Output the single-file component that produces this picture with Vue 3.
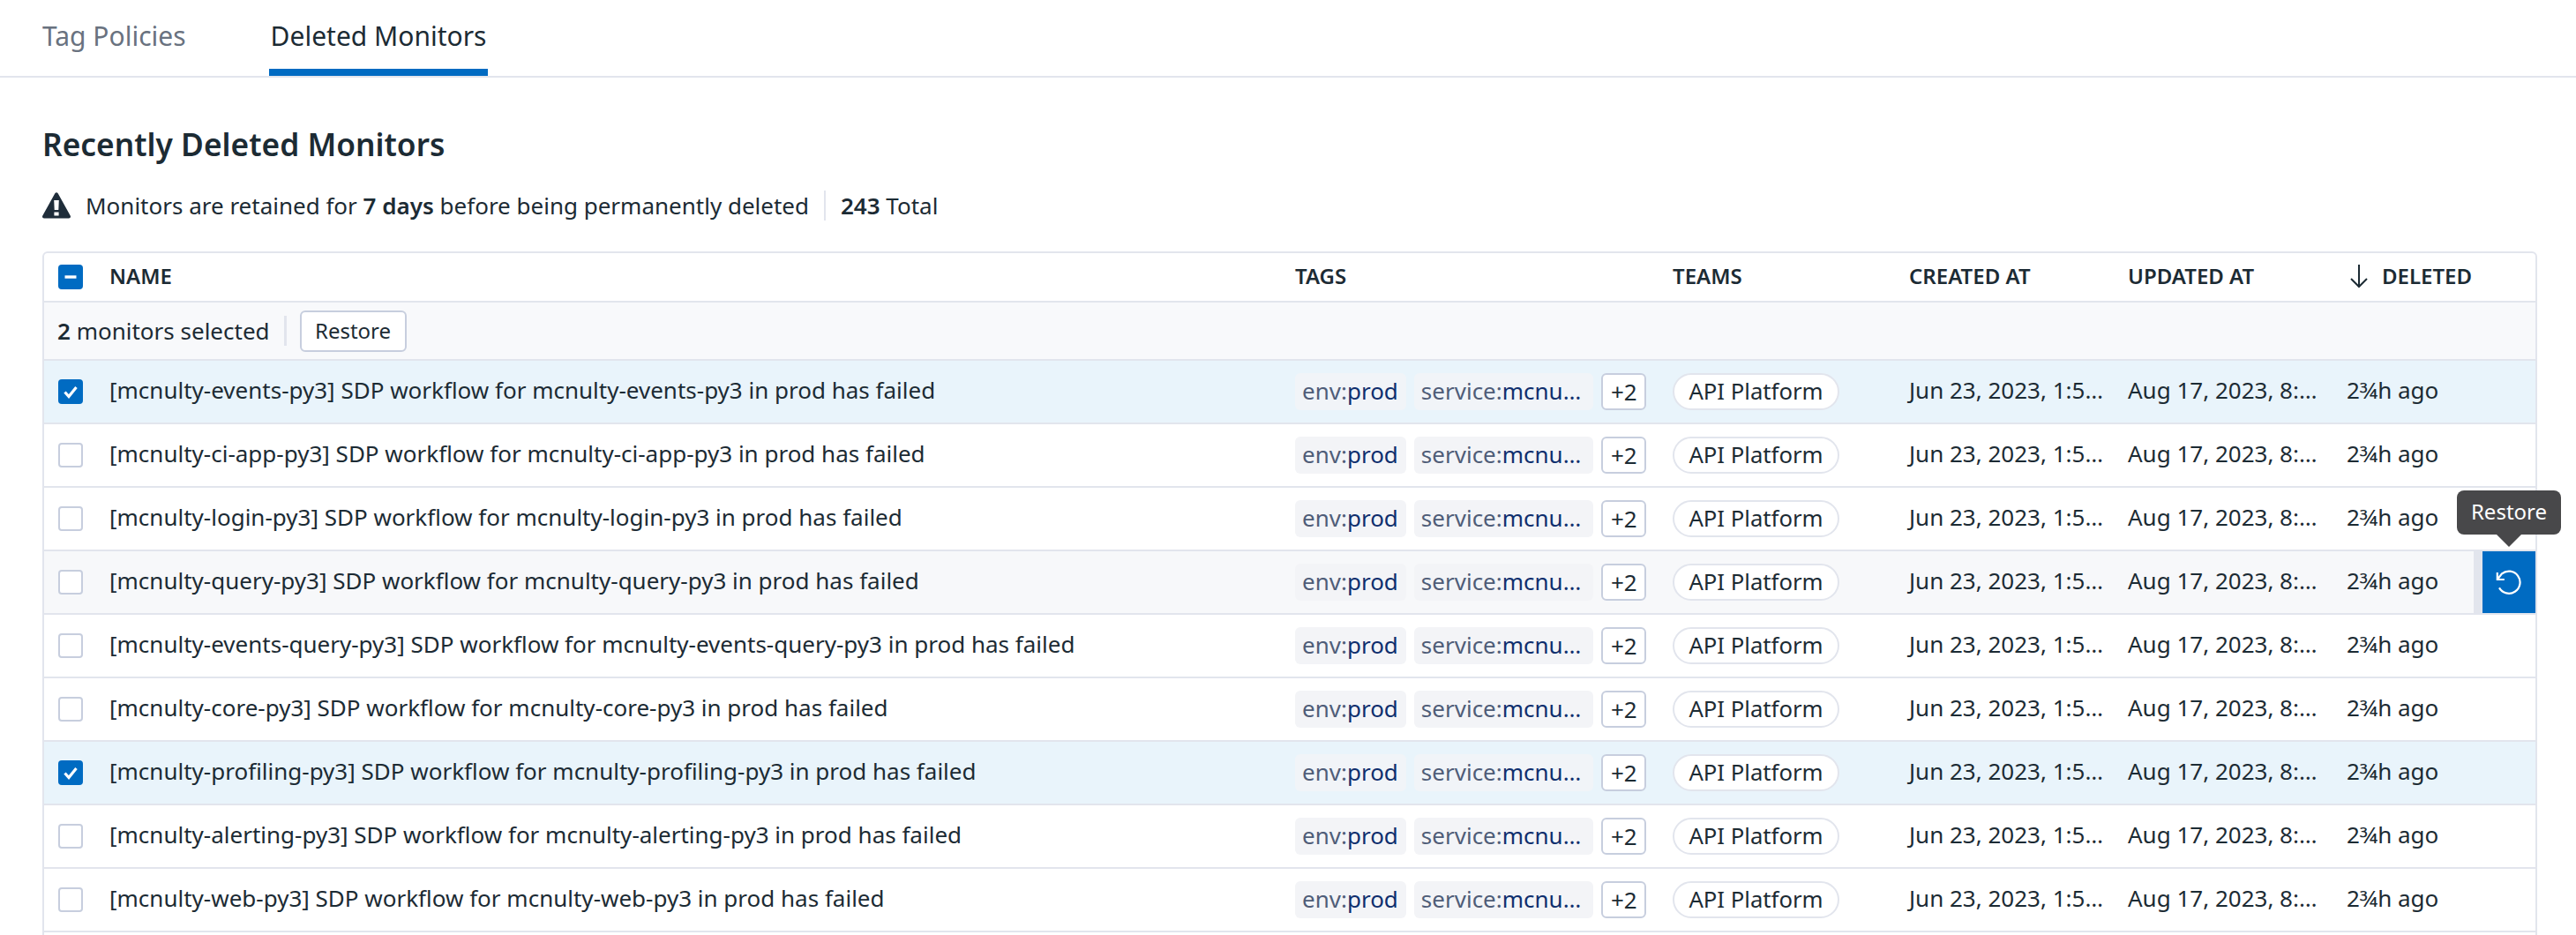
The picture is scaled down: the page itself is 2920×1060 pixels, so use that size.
<template>
  <div class="page">
    <nav class="tabs">
      <a class="tab">Tag Policies</a>
      <a class="tab active">Deleted Monitors</a>
    </nav>
    <main class="content">
      <h1 class="title">Recently Deleted Monitors</h1>
      <div class="notice">
        <svg class="warn" viewBox="0 0 32 30">
          <path fill="#1f2d3a" d="M14.3 1.2c.8-1.4 2.6-1.4 3.4 0l14 25.2c.8 1.4-.1 3.1-1.7 3.1H2c-1.6 0-2.5-1.7-1.7-3.1z" />
          <path fill="#fff" d="M13.2 9h5.6l-.5 11h-4.6zM13.4 22.6h5.2v3.8h-5.2z" />
        </svg>
        <span class="notice-text">Monitors are retained for <b>7 days</b> before being permanently deleted</span>
        <span class="notice-sep"></span>
        <span><b>243</b> Total</span>
      </div>

      <div class="table">
        <div class="row head">
          <span class="cell-check">
            <span class="check on">
              <svg viewBox="0 0 28 28"><path d="M7.5 14h13" stroke="#fff" stroke-width="3.4" fill="none" /></svg>
            </span>
          </span>
          <span>NAME</span>
          <span>TAGS</span>
          <span>TEAMS</span>
          <span>CREATED AT</span>
          <span>UPDATED AT</span>
          <span class="sorted">
            <svg class="arrow" viewBox="0 0 24 28">
              <path d="M12 1v25M3 17l9 9 9-9" stroke="#1c2b34" stroke-width="2" fill="none" />
            </svg>
            DELETED
          </span>
        </div>

        <div class="selection">
          <span><b>2</b> monitors selected</span>
          <span class="selection-sep"></span>
          <button class="btn">Restore</button>
        </div>

        <div
          v-for="m in monitors"
          :key="m.name"
          class="row item"
          :class="{ selected: m.selected, hovered: m.hovered }"
        >
          <span class="cell-check">
            <span class="check" :class="{ on: m.selected }">
              <svg v-if="m.selected" viewBox="0 0 28 28">
                <path d="M7.5 14.5l4.5 5 8.5-10.5" stroke="#fff" stroke-width="3.2" fill="none" />
              </svg>
            </span>
          </span>
          <span class="name">[{{ m.name }}] SDP workflow for {{ m.name }} in prod has failed</span>
          <span class="tags">
            <span class="tag">env:<em>prod</em></span>
            <span class="tag cut">service:<em>mcnu…</em></span>
            <span class="more">+2</span>
          </span>
          <span class="teams"><span class="team">API Platform</span></span>
          <span class="txt">Jun 23, 2023, 1:5…</span>
          <span class="txt">Aug 17, 2023, 8:…</span>
          <span class="txt">2¾h ago</span>

          <template v-if="m.hovered">
            <span class="restore-action">
              <svg viewBox="0 0 30 28">
                <path d="M4 20.4A12.6 12.6 0 1 0 7 4.4L1.8 11" stroke="#fff" stroke-width="2.2" fill="none" />
                <path d="M1.8 3v8h8" stroke="#fff" stroke-width="2.2" fill="none" />
              </svg>
            </span>
            <span class="tooltip">Restore</span>
          </template>
        </div>
      </div>
    </main>
  </div>
</template>

<script setup>
const names = [
  'mcnulty-events-py3',
  'mcnulty-ci-app-py3',
  'mcnulty-login-py3',
  'mcnulty-query-py3',
  'mcnulty-events-query-py3',
  'mcnulty-core-py3',
  'mcnulty-profiling-py3',
  'mcnulty-alerting-py3',
  'mcnulty-web-py3'
]

const monitors = names.map((name, i) => ({
  name,
  selected: i === 0 || i === 6,
  hovered: i === 3
}))
</script>

<style>
html,
body {
  margin: 0;
  overflow: hidden;
  background: #fff;
}
</style>

<style scoped>
.page {
  height: 1060px;
  overflow: hidden;
  font-family: "Noto Sans", sans-serif;
  font-size: 26px;
  line-height: 36px;
  color: #1c2b34;
}

.tabs {
  display: flex;
  gap: 94px;
  height: 86px;
  padding-left: 48px;
  border-bottom: 2px solid #e2e5ed;
}

.tab {
  height: 78px;
  padding-top: 18px;
  box-sizing: border-box;
  font-size: 30px;
  line-height: 46px;
  color: #69727f;
}

.tab.active {
  height: 86px;
  padding: 18px 2px 0;
  color: #1c2b34;
  border-bottom: 8px solid #006bc2;
}

.content {
  padding: 0 44px 0 48px;
}

.title {
  margin: 51px 0 0;
  font-size: 35.3px;
  line-height: 48px;
  font-weight: 600;
  color: #1c2b34;
}

.notice {
  display: flex;
  align-items: center;
  height: 40px;
  margin-top: 26px;
  font-size: 26px;
}

.warn {
  width: 32px;
  height: 30px;
  margin-right: 17px;
}

.notice b,
.selection b {
  font-weight: 600;
}

.notice-sep {
  width: 2px;
  height: 34px;
  margin: 0 17px;
  background: #e2e5ed;
}

.table {
  height: 800px;
  margin-top: 32px;
  border: 2px solid #e2e5ed;
  border-radius: 6px 6px 0 0;
}

.row {
  display: grid;
  grid-template-columns: 74px 1344px 428px 268px 248px 248px 1fr;
  align-items: center;
  position: relative;
  box-sizing: border-box;
  height: 72px;
  border-bottom: 2px solid #e2e5ed;
}

.head {
  height: 56px;
  font-size: 24px;
  font-weight: 600;
}

.head > span:not(.cell-check) {
  margin-bottom: 3px;
}

.name,
.txt {
  margin-bottom: 4px;
}

.cell-check {
  display: flex;
  padding-left: 16px;
}

.check {
  display: block;
  box-sizing: border-box;
  width: 28px;
  height: 28px;
  border: 2px solid #c7cede;
  border-radius: 4px;
  background: #fff;
}

.check.on {
  border: none;
  background: #006bc2;
}

.check svg {
  display: block;
}

.sorted {
  display: flex;
  align-items: center;
  gap: 14px;
}

.arrow {
  width: 24px;
  height: 28px;
  margin-left: 2px;
}

.selection {
  display: flex;
  align-items: center;
  box-sizing: border-box;
  height: 66px;
  padding-left: 15px;
  background: #f8f9fb;
  border-bottom: 2px solid #e2e5ed;
}

.selection-sep {
  width: 3px;
  height: 34px;
  margin: 0 15px 0 16px;
  background: #e2e5ed;
}

.btn {
  height: 47px;
  width: 121px;
  padding: 0;
  font: inherit;
  font-size: 24px;
  color: #1c2b34;
  background: #fff;
  border: 2px solid #c7cede;
  border-radius: 6px;
}

.item.selected {
  background: #e9f4fb;
}

.item.hovered {
  background: #f7f8fa;
}

.name {
  white-space: nowrap;
}

.tags {
  display: flex;
  align-items: center;
  gap: 9px;
}

.tag {
  display: block;
  height: 42px;
  padding: 0 9px 0 8px;
  line-height: 40px;
  border-radius: 6px;
  background: #f3f4f7;
  color: #4f5d78;
  white-space: nowrap;
}

.tag.cut {
  padding-right: 14px;
}

.selected .tag {
  background: #f1f4f8;
}

.tag em {
  font-style: normal;
  color: #0f2f6e;
}

.more {
  display: block;
  box-sizing: border-box;
  width: 51px;
  height: 42px;
  line-height: 38px;
  text-align: center;
  background: #fff;
  border: 2px solid #c7cede;
  border-radius: 6px;
}

.team {
  display: inline-block;
  box-sizing: border-box;
  height: 42px;
  width: 189px;
  line-height: 38px;
  font-size: 25.7px;
  text-align: center;
  background: #fff;
  border: 2px solid #e2e5ed;
  border-radius: 21px;
  white-space: nowrap;
}

.teams {
  display: flex;
}

.restore-action {
  position: absolute;
  top: 0;
  right: 0;
  bottom: 0;
  display: flex;
  align-items: center;
  justify-content: center;
  width: 60px;
  background: #006bc2;
  box-shadow: -10px 0 0 #e2e5ed;
}

.restore-action svg {
  width: 30px;
  height: 28px;
}

.tooltip {
  position: absolute;
  top: -69px;
  right: -29px;
  width: 118px;
  height: 50px;
  line-height: 48px;
  font-size: 24px;
  text-align: center;
  color: #fff;
  background: #48484a;
  border-radius: 8px;
}

.tooltip::after {
  content: "";
  position: absolute;
  left: 45px;
  top: 50px;
  border: 14px solid transparent;
  border-top-color: #48484a;
  border-bottom: none;
}
</style>
